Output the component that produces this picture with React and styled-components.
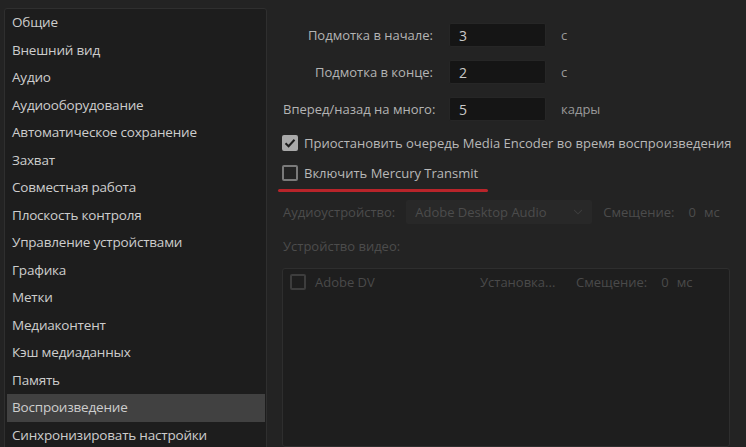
import styled, { createGlobalStyle } from 'styled-components';
import { HiChevronDown } from 'react-icons/hi2';

const GlobalStyle = createGlobalStyle`
  html, body {
    margin: 0;
    padding: 0;
    background: #232323;
    overflow: hidden;
  }
  body {
    font-family: "Open Sans", "Noto Sans", sans-serif;
    font-size: 13px;
  }
`;

const Page = styled.div`
  display: flex;
  width: 746px;
  height: 447px;
  background: #232323;
  overflow: hidden;
`;

const Sidebar = styled.ul`
  list-style: none;
  margin: 8px 0 0 4px;
  padding: 0 1px 0 2px;
  width: 258px;
  height: 460px;
  background: #1d1d1d;
  border: 1px solid #2f2f2f;
  border-radius: 3px;
  flex-shrink: 0;
`;

const Item = styled.li`
  height: 27.5px;
  line-height: 27.5px;
  padding-left: 5px;
  font-size: 13.5px;
  letter-spacing: -0.2px;
  color: #cdcdcd;
  background: ${(p) => (p.$active ? '#414141' : 'transparent')};
  white-space: nowrap;
`;

const Content = styled.div`
  display: flex;
  flex-direction: column;
  padding: 23px 0 0 16px;
  flex: 1;
`;

const FieldGrid = styled.div`
  display: grid;
  grid-template-columns: 150px 98px auto;
  column-gap: 15px;
  row-gap: 13px;
  align-items: center;
`;

const Label = styled.span`
  text-align: right;
  color: #b4b4b4;
  white-space: nowrap;
`;

const Input = styled.div`
  height: 24px;
  line-height: 24px;
  margin-left: 1px;
  padding-left: 9px;
  background: #151515;
  border: 1px solid #262626;
  border-radius: 2px;
  box-sizing: border-box;
  color: #c9c9c9;
  font-size: 14px;
`;

const Unit = styled.span`
  color: #9a9a9a;
`;

const CheckRow = styled.label`
  display: flex;
  align-items: center;
  gap: 6px;
  height: 30px;
  color: #b8b8b8;
  white-space: nowrap;
`;

const Box = styled.span`
  width: 16px;
  height: 16px;
  box-sizing: border-box;
  border-radius: 2px;
  display: flex;
  align-items: center;
  justify-content: center;
  flex-shrink: 0;
  border: 2px solid ${(p) => (p.$disabled ? '#3d3d3d' : p.$checked ? '#a9a9a9' : '#7a7a7a')};
  background: ${(p) => (p.$checked ? '#a9a9a9' : 'transparent')};
`;

const Checks = styled.div`
  display: flex;
  flex-direction: column;
  margin-top: 7px;
  margin-left: -1px;
`;

const Underlined = styled.div`
  position: relative;
  &::after {
    content: '';
    position: absolute;
    left: -4px;
    width: 210px;
    bottom: -4px;
    height: 3px;
    border-radius: 2px;
    background: #b8242a;
  }
`;

const DeviceRow = styled.div`
  display: flex;
  align-items: center;
  margin-top: 12px;
  color: #4c4c4c;
  white-space: nowrap;
`;

const Select = styled.div`
  display: flex;
  align-items: center;
  justify-content: space-between;
  width: 186px;
  height: 24px;
  margin: 0 11px 0 11px;
  padding: 0 8px 0 9px;
  box-sizing: border-box;
  background: #282828;
  border-radius: 2px;
  color: #4c4c4c;
`;

const Offset = styled.span`
  margin-right: ${(p) => p.$gap || 0}px;
`;

const SubTitle = styled.div`
  margin-top: 13px;
  color: #4c4c4c;
`;

const DeviceList = styled.div`
  margin: 13px 0 0 -1px;
  width: 448px;
  height: 200px;
  background: #1e1e1e;
  border: 1px solid #2e2e2e;
  border-radius: 3px;
  box-sizing: border-box;
  padding: 4px 0 0 7px;
`;

const DeviceItem = styled.div`
  display: flex;
  align-items: center;
  height: 18px;
  color: #4a4a4a;
  white-space: nowrap;
`;

const Col = styled.span`
  width: ${(p) => p.$w}px;
  margin-left: ${(p) => p.$ml || 0}px;
  flex-shrink: 0;
`;

function Check() {
  return (
    <svg width="12" height="12" viewBox="0 0 12 12">
      <path d="M1.5 6.2 L4.6 9.2 L10.5 2.8" fill="none" stroke="#1d1d1d" strokeWidth="2" />
    </svg>
  );
}

const items = [
  'Общие',
  'Внешний вид',
  'Аудио',
  'Аудиооборудование',
  'Автоматическое сохранение',
  'Захват',
  'Совместная работа',
  'Плоскость контроля',
  'Управление устройствами',
  'Графика',
  'Метки',
  'Медиаконтент',
  'Кэш медиаданных',
  'Память',
  'Воспроизведение',
  'Синхронизировать настройки',
];

export default function App() {
  return (
    <>
      <GlobalStyle />
      <Page>
        <Sidebar>
          {items.map((t) => (
            <Item key={t} $active={t === 'Воспроизведение'}>
              {t}
            </Item>
          ))}
        </Sidebar>
        <Content>
          <FieldGrid>
            <Label>Подмотка в начале:</Label>
            <Input>3</Input>
            <Unit>с</Unit>
            <Label>Подмотка в конце:</Label>
            <Input>2</Input>
            <Unit>с</Unit>
            <Label>Вперед/назад на много:</Label>
            <Input>5</Input>
            <Unit>кадры</Unit>
          </FieldGrid>
          <Checks>
            <CheckRow>
              <Box $checked>
                <Check />
              </Box>
              Приостановить очередь Media Encoder во время воспроизведения
            </CheckRow>
            <Underlined>
              <CheckRow>
                <Box />
                Включить Mercury Transmit
              </CheckRow>
            </Underlined>
          </Checks>
          <DeviceRow>
            Аудиоустройство:
            <Select>
              Adobe Desktop Audio
              <HiChevronDown size={12} color="#3e3e3e" />
            </Select>
            <Offset $gap={14}>Смещение:</Offset>
            <Offset $gap={8}>0</Offset>
            <Offset>мс</Offset>
          </DeviceRow>
          <SubTitle>Устройство видео:</SubTitle>
          <DeviceList>
            <DeviceItem>
              <Box $disabled />
              <Col $w={165} $ml={9}>Adobe DV</Col>
              <Col $w={96}>Установка...</Col>
              <Offset $gap={14}>Смещение:</Offset>
              <Offset $gap={8}>0</Offset>
              <Offset>мс</Offset>
            </DeviceItem>
          </DeviceList>
        </Content>
      </Page>
    </>
  );
}
